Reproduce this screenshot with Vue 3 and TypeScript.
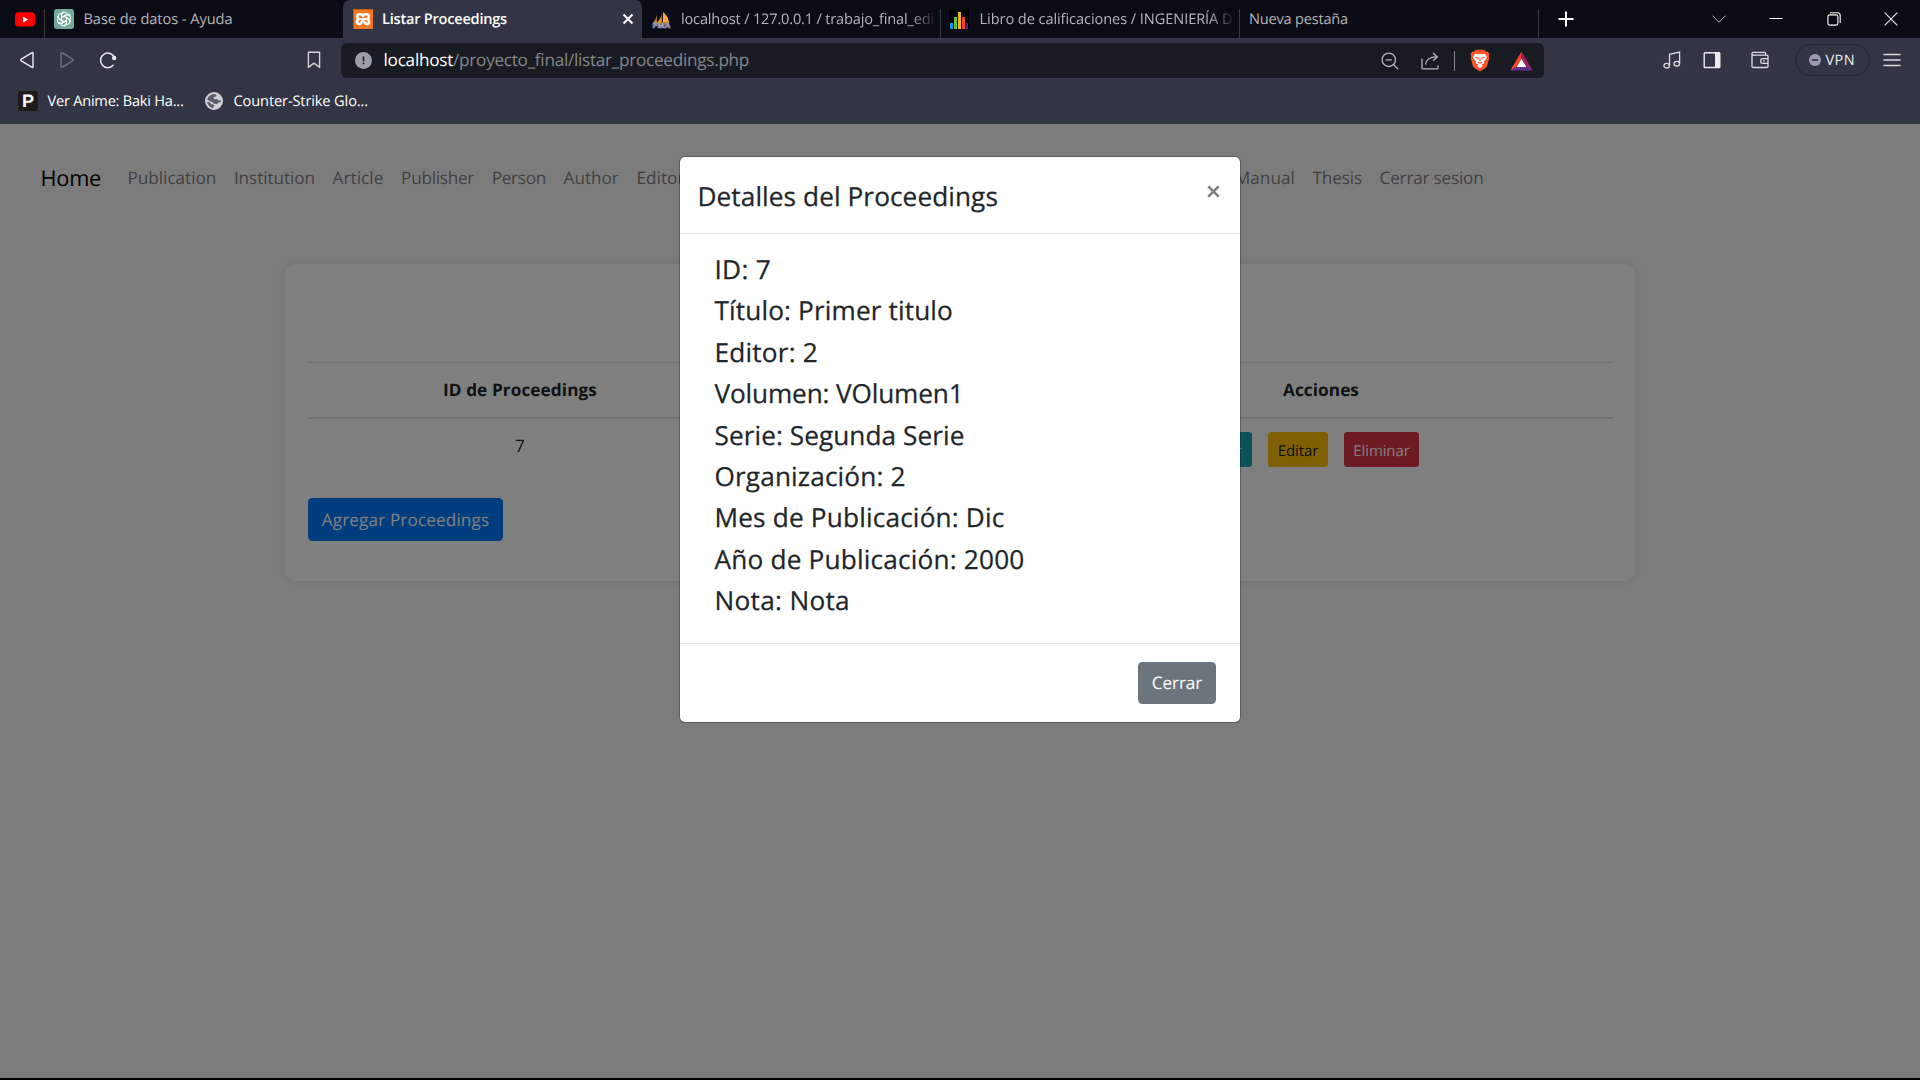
<script setup lang="ts">
interface Label {
  text: string
  width: number
}

interface NavLink extends Label {
  afterGap?: boolean
}

// Adjusts the tracking of a label so that it spans the given width.
const vFit = {
  mounted(el: HTMLElement, binding: { value: number }) {
    const natural = el.getBoundingClientRect().width
    const count = (el.textContent ?? '').length
    if (count > 0) {
      el.style.letterSpacing = `${((binding.value - natural) / count).toFixed(3)}px`
    }
  },
}

const navLinks: NavLink[] = [
  { text: 'Publication', width: 88.8 },
  { text: 'Institution', width: 81 },
  { text: 'Article', width: 51 },
  { text: 'Publisher', width: 73 },
  { text: 'Person', width: 54.3 },
  { text: 'Author', width: 55.3 },
  { text: 'Editor', width: 48 },
  { text: 'Manual', width: 60, afterGap: true },
  { text: 'Thesis', width: 49.5 },
  { text: 'Cerrar sesion', width: 104 },
]

const details: Label[] = [
  { text: 'ID: 7', width: 56.5 },
  { text: 'Título: Primer titulo', width: 238.5 },
  { text: 'Editor: 2', width: 103.5 },
  { text: 'Volumen: VOlumen1', width: 249 },
  { text: 'Serie: Segunda Serie', width: 250 },
  { text: 'Organización: 2', width: 191 },
  { text: 'Mes de Publicación: Dic', width: 290 },
  { text: 'Año de Publicación: 2000', width: 310 },
  { text: 'Nota: Nota', width: 135.5 },
]

const knotAngles = [0, 60, 120, 180, 240, 300]
</script>

<template>
  <div class="screen">
    <div class="tabs">
      <div class="tab pinned">
        <svg width="20" height="15" viewBox="0 0 20 15">
          <rect width="20" height="14.4" y=".2" rx="3.6" fill="#f00" />
          <path d="M8 4.4v6l5.2-3z" fill="#fff" />
        </svg>
      </div>
      <div class="tab first">
        <svg width="20" height="20" viewBox="0 0 20 20">
          <rect width="20" height="20" rx="3" fill="#74aa9c" />
          <g fill="none" stroke="#fff" stroke-width="1.05" stroke-linejoin="round">
            <path
              v-for="angle in knotAngles"
              :key="angle"
              :transform="`rotate(${angle} 10 10)`"
              d="M7.6 11.6V6.2a3.1 3.1 0 0 1 5.6-1.7M7.6 8.5l4.8-2.8a3.1 3.1 0 0 1 3.6.4"
            />
          </g>
        </svg>
        <span v-fit="149" class="tab-title">Base de datos - Ayuda</span>
      </div>
      <div class="tab active">
        <svg width="20" height="20" viewBox="0 0 20 20">
          <rect width="20" height="20" rx="1" fill="#f37623" />
          <path d="M.5 19.5V.5h19" fill="none" stroke="#c85b14" />
          <path
            d="M6.3 5.2h1.2q1.6 0 2.5 1.7.9-1.7 2.5-1.7h1.2q2.1 0 2.1 2.2 0 1.7-1.5 2.6 1.7.9 1.7 2.7 0 2.3-2.3 2.3-1.3 0-2.1-1.4L10 11.4l-1.6 2.2q-.8 1.4-2.1 1.4Q4 15 4 12.7q0-1.8 1.7-2.7-1.5-.9-1.5-2.6 0-2.2 2.1-2.2z"
            fill="none"
            stroke="#fff"
            stroke-width="2.6"
            stroke-linejoin="round"
          />
          <path d="M6.5 10h7" stroke="#fff" stroke-width="2" />
        </svg>
        <span v-fit="125" class="tab-title bold">Listar Proceedings</span>
        <svg class="tab-close" width="12" height="12" viewBox="0 0 12 12">
          <path d="M1.5 1.5l9 9m0-9l-9 9" stroke="#fff" stroke-width="2" />
        </svg>
      </div>
      <div class="tab lined pma">
        <svg width="21" height="20" viewBox="0 0 21 20">
          <path d="M5.6 3.5Q6.2 9 2 14h4z" fill="#c9822b" />
          <path d="M10.6.5Q12 8 5.2 14.5h5.6z" fill="#f7941d" />
          <path d="M12 3q5 4 6 10l-6 1.5z" fill="#f9a63a" />
          <path d="M2 14l17-1.5-2 3H3z" fill="#b9762a" />
          <text
            x="10.3"
            y="19.3"
            text-anchor="middle"
            font-size="7"
            font-weight="700"
            textLength="18"
            lengthAdjust="spacingAndGlyphs"
            fill="#2a2f63"
            stroke="#b7bad3"
            stroke-width=".55"
          >PMA</text>
        </svg>
        <span class="clip"><span v-fit="253" class="tab-title">localhost / 127.0.0.1 / trabajo_final_edi</span></span>
      </div>
      <div class="tab lined">
        <svg width="20" height="20" viewBox="0 0 20 20">
          <rect width="20" height="20" fill="#000" />
          <path d="M1 14h3v6H1z" fill="#0a9cf0" />
          <path d="M5 8h3v12H5z" fill="#6bbf2a" />
          <path d="M9 3h3v17H9z" fill="#f5b70a" />
          <path d="M13 8h3v12h-3z" fill="#f4471f" />
          <path d="M17 14h2v6h-2z" fill="#5b1a9a" />
        </svg>
        <span class="clip libro"><span v-fit="253" class="tab-title">Libro de calificaciones / INGENIERÍA D</span></span>
      </div>
      <div class="tab lined last">
        <span v-fit="99" class="tab-title">Nueva pestaña</span>
      </div>
      <svg class="plus" width="16" height="16" viewBox="0 0 16 16">
        <path d="M8 .5v15M.5 8h15" stroke="#fff" stroke-width="2" />
      </svg>
      <div class="window-controls">
        <svg width="14" height="14" viewBox="0 0 14 14">
          <path d="M.5 3.7L7 10.2l6.5-6.5" fill="none" stroke="#b9b9be" />
        </svg>
        <svg width="14" height="14" viewBox="0 0 14 14">
          <path d="M.5 6.5h13" stroke="#fff" />
        </svg>
        <svg width="14" height="14" viewBox="0 0 14 14">
          <rect x=".9" y="2.9" width="10" height="10.2" rx="1.8" fill="none" stroke="#fff" stroke-width="1.1" />
          <path d="M3 .8h7.4q2.8 0 2.8 2.8v7.4" fill="none" stroke="#fff" stroke-width="1.1" />
        </svg>
        <svg width="14" height="14" viewBox="0 0 14 14">
          <path d="M.7.7l12.6 12.6m0-12.6L.7 13.3" stroke="#e4e4e6" stroke-width="1.2" />
        </svg>
      </div>
    </div>

    <div class="toolbar">
      <div class="history">
        <svg width="16" height="18" viewBox="0 0 16 18">
          <path d="M13.6 1.4L2.3 8.2q-1.1.8 0 1.6l11.3 6.8.4-.4V1.8z" fill="none" stroke="#ececef" stroke-width="1.4" stroke-linejoin="round" />
        </svg>
        <svg width="16" height="18" viewBox="0 0 16 18">
          <path d="M2.4 1.4l11.3 6.8q1.1.8 0 1.6L2.4 16.6 2 16.2V1.8z" fill="none" stroke="#6c6e7a" stroke-width="1.4" stroke-linejoin="round" />
        </svg>
        <svg width="18" height="18" viewBox="0 0 18 18">
          <path d="M14.2 14.3A7.3 7.3 0 1 1 15.6 6.6" fill="none" stroke="#ececef" stroke-width="1.5" stroke-linecap="round" />
          <circle cx="15.2" cy="7" r="2.2" fill="#ececef" />
        </svg>
      </div>
      <svg class="bookmark" width="14" height="18" viewBox="0 0 14 18">
        <path d="M1.4 1.2h11.2v15.2L7 12.1l-5.6 4.3z" fill="none" stroke="#d3d3d8" stroke-width="1.4" stroke-linejoin="round" />
      </svg>
      <div class="address">
        <svg class="info" width="17" height="17" viewBox="0 0 17 17">
          <circle cx="8.5" cy="8.5" r="8.5" fill="#9c9eaa" />
          <path d="M8.5 4.6v4.6M8.5 10.6v1.6" stroke="#181b22" stroke-width="1.6" />
        </svg>
        <span class="url"><span v-fit="69.6" class="host">localhost</span><span v-fit="296" class="path">/proyecto_final/listar_proceedings.php</span></span>
        <svg class="magnifier" width="18" height="18" viewBox="0 0 18 18">
          <g fill="none" stroke="#b5b6bb" stroke-width="1.3">
            <circle cx="7.8" cy="7.8" r="6.7" />
            <path d="M12.6 12.6l4.6 4.6M4.8 7.8h6" />
          </g>
        </svg>
        <svg class="share" width="18" height="18" viewBox="0 0 18 18">
          <g fill="none" stroke="#b5b6bb" stroke-width="1.3">
            <path d="M1 6.5v9.2q0 1.2 1.2 1.2h13.6q1.2 0 1.2-1.2v-2.2" />
            <path d="M4.6 12.6Q5.2 5 15.6 4.9M12 1l4.3 3.9L12 8.8" />
          </g>
        </svg>
        <i class="bar" />
        <svg class="brave" width="20" height="23" viewBox="0 0 20 23">
          <path d="M6 .8h8l2 2 1.7-.2L19.4 5l-.6 2.3.5 1.5-2 7.6q-.5 1.8-2 2.8L10 22.5l-5.3-3.3q-1.5-1-2-2.8L.7 8.8l.5-1.5L.6 5l1.7-2.4L4 2.8z" fill="#fb542b" />
          <path d="M5.2 4.8l2.5.5L10 5l2.3.3 2.5-.5 1.9 2.8-.4 1.8-2.4 3.3.4 1.6-2 1-2.3 2.8-2.3-2.8-2-1 .4-1.6-2.4-3.3-.4-1.8z" fill="#fff" />
          <path d="M5.4 8.3l3 .8-.5 1.2M14.6 8.3l-3 .8.5 1.2M10 9.5v3.2M7.8 13.2l2.2.9 2.2-.9" fill="none" stroke="#fb542b" stroke-width="1.1" />
          <path d="M7.2 17l2.8-1.8 2.8 1.8-2.8 2z" fill="#fff" />
        </svg>
        <svg class="bat" width="23" height="20" viewBox="0 0 23 20">
          <path d="M11.5.4v7L6 16.4.3 19.6z" fill="#ff4724" />
          <path d="M11.5.4v7l5.5 9 5.7 3.2z" fill="#9e1f63" />
          <path d="M.3 19.6L6 16h11l5.7 3.6z" fill="#662d91" />
          <path d="M11.5 7.8l4.9 8.2H6.6z" fill="#fff" />
        </svg>
      </div>
      <div class="actions">
        <svg width="18" height="18" viewBox="0 0 18 18">
          <g fill="none" stroke="#dcdce0" stroke-width="1.3">
            <ellipse cx="3.7" cy="14.7" rx="2.8" ry="2.3" />
            <ellipse cx="13.8" cy="12.7" rx="2.8" ry="2.3" />
            <path d="M6.5 14.7V3.3l10.1-2.2v11.6" />
          </g>
        </svg>
        <svg width="18" height="18" viewBox="0 0 18 18">
          <rect x="1.2" y="1.7" width="15.6" height="14.8" rx=".8" fill="none" stroke="#ececef" stroke-width="1.4" />
          <path d="M12 1.5h5v15h-5z" fill="#ececef" />
        </svg>
        <svg width="18" height="18" viewBox="0 0 18 18">
          <g fill="none" stroke="#dcdce0" stroke-width="1.3">
            <path d="M14.6 4.2V2.4q0-1-1-1H2.3Q1 1.4 1 2.8v12.4q0 1.3 1.3 1.3h13.4q1.3 0 1.3-1.3V5.6q0-1.4-1.3-1.4H2.6Q1 4.2 1 2.8" />
            <path d="M17 7.6h-5.6q-1.7 0-1.7 2.4t1.7 2.4H17M12.2 10h1.5" />
          </g>
        </svg>
        <div class="vpn">
          <svg width="12" height="12" viewBox="0 0 12 12">
            <circle cx="6" cy="6" r="6" fill="#9b9bb4" />
            <path d="M2.8 6h6.4" stroke="#323544" stroke-width="1.6" />
          </svg>
          <span v-fit="29.5">VPN</span>
        </div>
        <svg width="18" height="14" viewBox="0 0 18 14">
          <path d="M.5 1.5h17M.5 7h17M.5 12.6h17" stroke="#dcdce0" stroke-width="1.5" />
        </svg>
      </div>
    </div>

    <div class="bookmarks">
      <span class="p-icon">P</span>
      <span v-fit="136" class="bookmark-title">Ver Anime: Baki Ha...</span>
      <svg class="globe" width="18" height="18" viewBox="0 0 18 18">
        <circle cx="9" cy="9" r="9" fill="#cfd1d6" />
        <path d="M6.2 2.6l3.6-.5 1.8.8-.4 1.5-2.2.6-.3 1.5 1.8.8 1.4-.3 1.2 1.3 2.7.2.2 1.6-2.4.3-1.7 1.7-3.2-.3-1.3-1.9-2.6-.6L2.1 7.5q1-3.4 4.1-4.9z" fill="#5a5d6b" />
        <path d="M2 9.8l3 .6 1.3 1.6 2.5.8.4 1.4-1.5 1.9Q3.3 15.2 2 9.8z" fill="#5a5d6b" />
      </svg>
      <span v-fit="134.5" class="bookmark-title">Counter-Strike Glo...</span>
    </div>

    <main class="page">
      <nav class="nav">
        <span v-fit="60.5" class="brand">Home</span>
        <span v-for="link in navLinks" :key="link.text" class="nav-link" :class="{ 'after-gap': link.afterGap }">
          <span v-fit="link.width">{{ link.text }}</span>
        </span>
      </nav>
      <section class="card">
        <div class="row head">
          <div class="col-id"><span v-fit="154">ID de Proceedings</span></div>
          <div class="col-actions"><span v-fit="76">Acciones</span></div>
        </div>
        <div class="row">
          <div class="col-id seven"><span>7</span></div>
          <div class="col-actions buttons">
            <div class="btn small info-btn"><span v-fit="22">Ver</span></div>
            <div class="btn small warning"><span v-fit="40.5">Editar</span></div>
            <div class="btn small danger"><span v-fit="56.5">Eliminar</span></div>
          </div>
        </div>
        <div class="btn primary"><span v-fit="167.5">Agregar Proceedings</span></div>
      </section>
      <div class="backdrop">
        <div class="modal">
          <header class="modal-header">
            <span v-fit="300.5">Detalles del Proceedings</span>
            <svg width="13" height="13" viewBox="0 0 13 13">
              <path d="M1.3 1.3l10.4 10.4m0-10.4L1.3 11.7" stroke="#7f7f7f" stroke-width="2.6" />
            </svg>
          </header>
          <div class="modal-body">
            <div v-for="line in details" :key="line.text" class="detail">
              <span v-fit="line.width">{{ line.text }}</span>
            </div>
          </div>
          <footer class="modal-footer">
            <div class="btn secondary"><span v-fit="50.5">Cerrar</span></div>
          </footer>
        </div>
      </div>
    </main>
  </div>
</template>

<style>
body {
  margin: 0;
  overflow: hidden;
  background: #000;
}
</style>

<style scoped>
.screen {
  width: 1920px;
  height: 1080px;
  display: flex;
  flex-direction: column;
  background: #000;
  font-family: 'Open Sans', 'Noto Sans', sans-serif;
  text-rendering: geometricPrecision;
  white-space: nowrap;
  overflow: hidden;
}

.screen * {
  box-sizing: border-box;
}

svg {
  display: block;
  flex: none;
}

span {
  flex: none;
}

.tabs {
  height: 38px;
  flex: none;
  display: flex;
  background: #0b0b15;
  color: #b4b4b8;
  font-size: 14.6px;
}

.tab {
  width: 298px;
  flex: none;
  display: flex;
  align-items: center;
  padding: 0 0 0 8px;
  gap: 9.5px;
}

.tab.pinned {
  width: 45px;
  padding-left: 15px;
  background: linear-gradient(#3b3b3b, #3b3b3b) right bottom / 1px 29px no-repeat;
}

.tab.first {
  padding-left: 9px;
}

.tab.active {
  width: 299px;
  padding: 0 8.5px 0 10px;
  gap: 9px;
  border-radius: 7px 7px 0 0;
  background: #323544;
  color: #fff;
}

.tab.lined {
  width: 299px;
  background: linear-gradient(#3b3b3b, #3b3b3b) right bottom / 1px 29px no-repeat;
}

.tab.pma {
  padding-left: 8.5px;
  gap: 9.5px;
}

.tab.last {
  padding-left: 9px;
}

.tab-title {
  display: inline-block;
  line-height: 38px;
}

.tab-title.bold {
  font-weight: 600;
}

.tab-close {
  margin-left: auto;
}

.clip {
  width: 256px;
  overflow: hidden;
  mask-image: linear-gradient(to right, #000 230px, transparent 256px);
}

.clip.libro {
  margin-left: 1px;
}

.plus {
  margin: 11px 0 0 19px;
}

.window-controls {
  margin: 12px 22px 0 auto;
  display: flex;
  gap: 43.3px;
}

.toolbar {
  height: 45px;
  flex: none;
  display: flex;
  align-items: center;
  background: #323544;
}

.history {
  display: flex;
  align-items: center;
  gap: 24px;
  padding: 0 0 1px 19px;
}

.bookmark {
  margin: 0 0 1px 190px;
}

.address {
  width: 1203px;
  height: 35px;
  margin-left: 20px;
  padding: 0 11.5px 0 14px;
  display: flex;
  align-items: center;
  border-radius: 6px;
  background: #181b22;
}

.url {
  margin-left: 11.5px;
  font-size: 17.2px;
  line-height: 35px;
}

.url span {
  display: inline-block;
}

.host {
  color: #fff;
}

.path {
  color: #85878c;
}

.magnifier {
  margin-left: auto;
}

.share {
  margin-left: 22px;
}

.bar {
  width: 1px;
  height: 20px;
  margin: 0 15px;
  background: #85878c;
}

.bat {
  margin-left: 20px;
}

.actions {
  margin-left: auto;
  padding: 0 19px 1px 0;
  display: flex;
  align-items: center;
}

.actions > svg:nth-child(2) {
  margin-left: 22px;
}

.actions > svg:nth-child(3) {
  margin-left: 30px;
}

.vpn {
  width: 75px;
  height: 32px;
  margin: 0 13.5px 0 25.5px;
  padding-left: 13px;
  display: flex;
  align-items: center;
  gap: 5px;
  border: 1px solid #242633;
  border-radius: 16px;
  color: #ececef;
  font-size: 14.5px;
}

.bookmarks {
  height: 41px;
  flex: none;
  display: flex;
  align-items: center;
  padding: 0 0 5px 18px;
  background: #323544;
  color: #fff;
  font-size: 14.6px;
}

.bookmark-title {
  display: inline-block;
}

.p-icon {
  width: 20px;
  height: 20px;
  margin-right: 9.5px;
  border-radius: 2px;
  background: #1f1b1c;
  font-family: 'Liberation Sans', sans-serif;
  font-size: 18px;
  font-weight: 700;
  line-height: 20px;
  text-align: center;
}

.globe {
  margin: 0 10.5px 0 21.5px;
}

.page {
  position: relative;
  height: 954px;
  flex: none;
  background: #f8f9fa;
  color: #212529;
  font-size: 17.2px;
}

.nav {
  display: flex;
  align-items: center;
  height: 108px;
  padding: 1.5px 0 0 40.5px;
}

.brand {
  margin: -1px 26.5px 0 0;
  color: #000;
  font-size: 21.8px;
}

.nav-link {
  margin-right: 17.6px;
  color: rgba(0, 0, 0, 0.5);
}

.nav-link > span {
  display: inline-block;
}

.after-gap {
  margin-left: 532.8px;
}

.card {
  width: 1350px;
  height: 317px;
  margin: 32px auto 0;
  padding: 98px 22px 0 23px;
  border-radius: 11px;
  background: #fff;
  box-shadow: 0 0 11px rgba(0, 0, 0, 0.1);
}

.row {
  display: flex;
  height: 79px;
  line-height: 26px;
}

.row.head {
  height: 57px;
  padding-top: 15px;
  border-top: 1px solid #dee2e6;
  border-bottom: 2px solid #dee2e6;
  font-weight: 700;
}

.col-id {
  width: 424px;
  text-align: center;
}

.col-id.seven {
  padding-top: 15px;
}

.col-id > span,
.col-actions > span {
  display: inline-block;
}

.col-actions {
  margin-left: auto;
  width: 584px;
  text-align: center;
}

.col-actions.buttons {
  display: flex;
  justify-content: center;
  gap: 16px;
  padding: 13px 14px 0 0;
}

.btn {
  display: flex;
  align-items: center;
  justify-content: center;
  height: 43px;
  padding-top: 1px;
  border-radius: 4.4px;
  color: #fff;
}

.btn.small {
  height: 35px;
  padding-top: 3px;
  border-radius: 3.5px;
  font-size: 15px;
}

.info-btn {
  width: 43px;
  background: #17a2b8;
}

.warning {
  width: 60px;
  background: #ffc107;
  color: #212529;
}

.danger {
  width: 75px;
  background: #dc3545;
}

.primary {
  width: 195px;
  background: #007bff;
}

.secondary {
  width: 78px;
  height: 42px;
  background: #6c757d;
}

.backdrop {
  position: absolute;
  inset: 0;
  display: flex;
  align-items: flex-start;
  justify-content: center;
  padding-top: 32px;
  background: rgba(0, 0, 0, 0.5);
}

.modal {
  width: 562px;
  height: 567px;
  display: flex;
  flex-direction: column;
  border: 1px solid rgba(0, 0, 0, 0.25);
  border-radius: 6px;
  background: #fff;
  background-clip: padding-box;
}

.modal-header,
.modal-body {
  font-size: 26.2px;
  font-weight: 500;
  -webkit-text-stroke: 0.25px #212529;
}

.modal-header {
  height: 77px;
  flex: none;
  display: flex;
  align-items: flex-start;
  justify-content: space-between;
  padding: 0 20.5px 0 17.5px;
  border-bottom: 1px solid #dee2e6;
  line-height: 78px;
}

.modal-header svg {
  margin-top: 28px;
}

.modal-body {
  height: 409px;
  flex: none;
  padding: 15px 0 0 34.5px;
}

.detail {
  line-height: 41.4px;
  height: 41.4px;
}

.detail > span {
  display: inline-block;
}

.modal-footer {
  flex: 1;
  display: flex;
  align-items: flex-start;
  justify-content: flex-end;
  padding: 18px 24px 0 0;
  border-top: 1px solid #dee2e6;
}
</style>
